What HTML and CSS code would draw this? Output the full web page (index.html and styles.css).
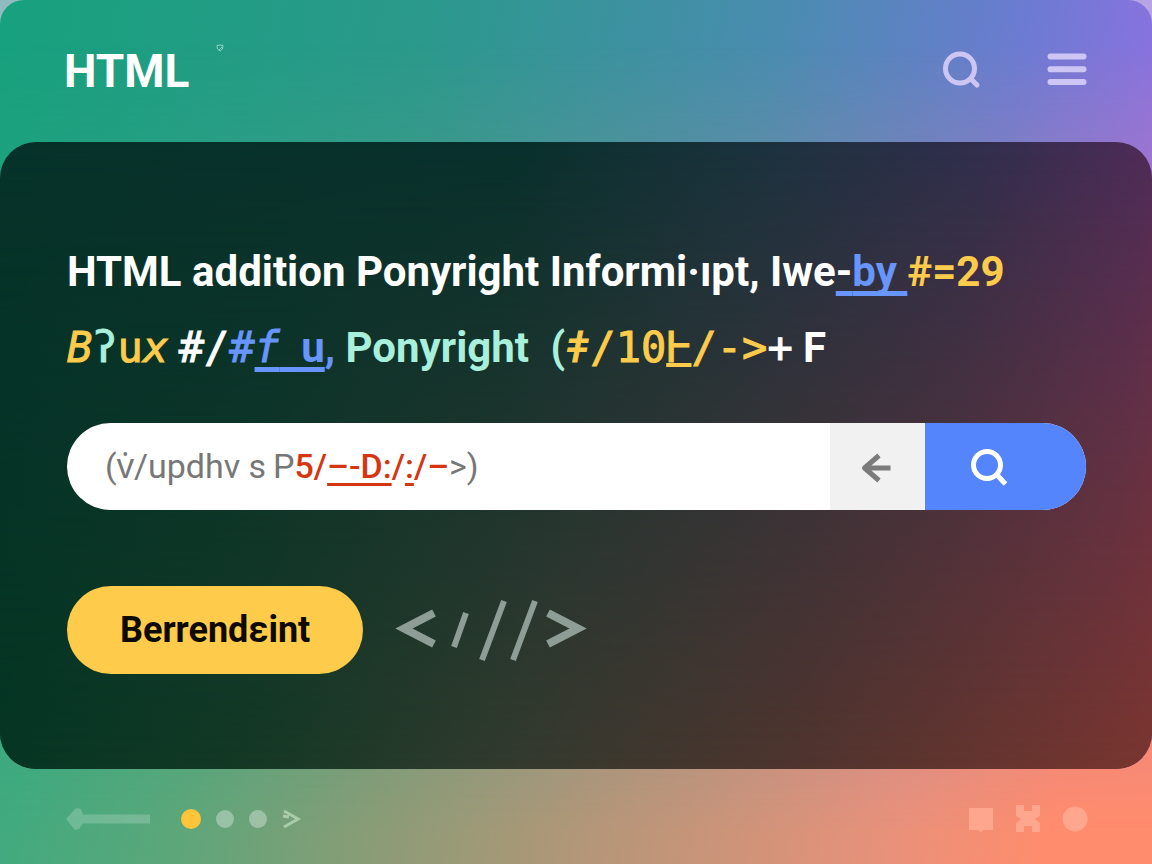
FILE: index.html
```html
<!DOCTYPE html>
<html lang="en">
<head>
<meta charset="utf-8">
<title>HTML</title>
<link rel="stylesheet" href="styles.css">
</head>
<body>
<div class="page">
  <header class="topbar">
    <div class="brand">HTML<svg class="spark" width="8" height="12" viewBox="0 0 8 12"><path d="M1 2.500 4 2l3 .5L6.500 6 4 8 1.500 6zM3 7l3-3"/></svg></div>
    <nav class="tools">
      <button class="icon-btn" aria-label="Search"><svg width="40" height="40" viewBox="0 0 40 40"><circle cx="16" cy="17.500" r="14.500"/><path d="m27 28 6 6" stroke-linecap="round"/></svg></button>
      <button class="icon-btn" aria-label="Menu"><svg width="40" height="40" viewBox="0 0 40 40"><path class="bars" d="M2.500 5.500h33M2.500 18.200h33M2.500 31h33"/></svg></button>
    </nav>
  </header>

  <main class="panel">
    <h1 class="title">
      <span class="line">HTML addition Ponyright Informi·ıpt, Iwe<a class="link" href="#by"><span class="plain">-</span>by&nbsp;</a><span class="gold">#=29</span></span>
      <span class="line"><span class="code"><span class="gold"><i>B</i></span><span class="mint">ʔ</span><span class="gold">u<i>x</i></span></span> <span class="code">#/<span class="blue">#</span></span><a class="link" href="#fu"><i class="code">f</i>&ensp;u</a><span class="blue">,</span> <span class="mint">Ponyright&ensp;(</span><span class="code"><span class="gold"><i>ǂ</i>/10<span class="base">Ⱶ</span>/-&gt;</span>+</span> F</span>
    </h1>

    <form class="search">
      <div class="field">
        <input class="input" id="query" type="text">
        <label class="hint" for="query">(v̇/updhv s&thinsp;P<span class="red">5/<u>–-D:</u>/<u>:</u>/–</span>&gt;)</label>
      </div>
      <button class="back" type="button" aria-label="Back"><svg width="32" height="32" viewBox="0 0 32 32"><path d="M28.500 17H3M17 4.500 2.500 17 17 29.500"/></svg></button>
      <button class="go" type="button" aria-label="Search"><svg width="40" height="40" viewBox="0 0 40 40"><circle cx="17" cy="18" r="13.500"/><path d="m27 28 8.500 9"/></svg></button>
    </form>

    <div class="actions">
      <button class="cta" type="button">Berrendεint</button>
      <svg class="tag" width="184" height="64" viewBox="0 0 184 64"><path d="M34 15 4 30.500 34 46M148 15l30 15.500L148 46"/><path class="slash" d="M54 49 66 15M82 62 104 3M113 62 135 3"/></svg>
    </div>
  </main>

  <footer class="bottombar">
    <div class="pager">
      <svg class="arrow" width="84" height="24" viewBox="0 0 84 24"><path d="M0 12 10 1l5 1 2 5.500h67v9H17L13 22l-4 1z"/></svg>
      <span class="dot active"></span>
      <span class="dot"></span>
      <span class="dot"></span>
      <svg class="next" width="18" height="20" viewBox="0 0 18 20"><path d="m2 2 14 8-14 8M1 7l6 1"/></svg>
    </div>
    <div class="shapes">
      <svg width="26" height="28" viewBox="0 0 26 28"><path d="M1 3h24v22H15l-2 2-3-2H1z"/></svg>
      <svg width="26" height="28" viewBox="0 0 26 28"><path d="M1 0h8v6h8V0h8v11l-5 3 5 4v9h-8v-6H9v6H1V18l5-4-5-3z"/></svg>
      <svg width="26" height="28" viewBox="0 0 26 28"><circle cx="13" cy="14" r="12.500"/></svg>
    </div>
  </footer>
</div>
</body>
</html>
```
FILE: styles.css
```css
* {
  box-sizing: border-box;
}

body {
  margin: 0;
  background: linear-gradient(90deg, #8fbcc0, #b8a4e4);
  font-family: Roboto, "Noto Sans", "DejaVu Sans", sans-serif;
  color: #fff;
}

button {
  margin: 0;
  padding: 0;
  border: 0;
  background: none;
  color: inherit;
  font: inherit;
  cursor: pointer;
}

svg {
  display: block;
  overflow: visible;
  fill: none;
  stroke: currentColor;
}

.page {
  position: relative;
  isolation: isolate;
  display: flex;
  flex-direction: column;
  min-height: 100vh;
  overflow: hidden;
  border-radius: 24px 24px 0 0;
  background: linear-gradient(100deg, #17a17d 0%, #2b998c 33%, #4a8cb0 60%, #6c7bd2 79%, #9070e2 92%, #a870d8 100%);
}

.page::before {
  content: "";
  position: absolute;
  inset: 0;
  z-index: -1;
  background: linear-gradient(100deg, #36ac80 0%, #42aa7e 12%, #5aa77a 24%, #8a9c76 40%, #b59678 57%, #ea917a 80%, #ff8c6c 92%);
  mask-image: linear-gradient(#0000 5%, #000 96%);
}

.topbar {
  display: flex;
  align-items: center;
  justify-content: space-between;
  height: 142px;
  padding: 0 64px;
}

.brand {
  display: flex;
  gap: 26px;
  font-size: 46px;
  font-weight: 700;
  line-height: 56px;
}

.spark {
  opacity: 0.5;
}

.tools {
  display: flex;
  gap: 64px;
  color: #cdc6f4;
}

.tools svg {
  stroke-width: 5;
}

.tools .bars {
  stroke-width: 6;
  stroke-linecap: round;
}

.panel {
  position: relative;
  isolation: isolate;
  display: flex;
  flex: 1;
  flex-direction: column;
  padding: 92px 66px 0 67px;
  overflow: hidden;
  border-radius: 36px;
  background: linear-gradient(95deg, #06322a 0%, #09302c 43%, #1b323e 63%, #302e4c 81%, #4d2c58 95%, #602c54 100%);
}

.panel::before {
  content: "";
  position: absolute;
  inset: 0;
  z-index: -1;
  background: linear-gradient(90deg, #053623 0%, #143925 22%, #333a2e 45%, #50342e 70%, #7a352f 100%);
  mask-image: linear-gradient(#0000, #000);
}

.title {
  margin: 0;
  font-size: 42px;
  font-weight: 700;
  line-height: 76px;
}

.line {
  display: block;
  height: 76px;
  white-space: nowrap;
}

.code {
  font-family: "DejaVu Sans Mono", "DejaVu Sans", monospace;
  font-weight: 400;
  -webkit-text-stroke: 1px currentColor;
}

.plain {
  color: #fff;
}

.gold {
  color: #fdcb4b;
}

.mint {
  color: #a8f0dc;
}

.blue,
.link {
  color: #6795fb;
}

.link {
  text-decoration: underline;
  text-decoration-thickness: 5px;
  text-underline-offset: 5px;
  text-decoration-skip-ink: none;
}

.base {
  text-decoration: underline;
  text-decoration-thickness: 4px;
  text-underline-offset: 1px;
  text-decoration-skip-ink: none;
}

.search {
  display: flex;
  height: 87px;
  margin-top: 37px;
  overflow: hidden;
  border-radius: 44px;
  background: #fff;
}

.field {
  position: relative;
  flex: 1;
}

.input {
  width: 100%;
  height: 100%;
  padding: 0 38px;
  border: 0;
  outline: 0;
  background: none;
  font: inherit;
  font-size: 34px;
}

.hint {
  position: absolute;
  inset: 0;
  padding-left: 38px;
  color: #777;
  font-size: 34px;
  line-height: 87px;
  white-space: nowrap;
}

.red {
  color: #d6360f;
  font-weight: 500;
}

.red u {
  text-decoration-thickness: 3px;
  text-underline-offset: 5px;
}

.back,
.go {
  display: flex;
  align-items: center;
}

.back {
  justify-content: center;
  width: 95px;
  background: #f1f1f1;
  color: #7b7b7b;
}

.back svg {
  stroke-width: 5;
  stroke-linejoin: round;
}

.go {
  width: 161px;
  padding-left: 45px;
  background: #5585fc;
}

.go svg {
  stroke-width: 5;
}

.actions {
  display: flex;
  align-items: center;
  gap: 37px;
  margin-top: 76px;
}

.cta {
  height: 88px;
  padding: 0 53px;
  border-radius: 44px;
  background: #fecb4a;
  color: #0c0a02;
  font-size: 36px;
  font-weight: 700;
}

.tag {
  color: #8e9d96;
  stroke-width: 8;
}

.slash {
  stroke-width: 6;
}

.bottombar {
  display: flex;
  align-items: center;
  justify-content: space-between;
  height: 95px;
  padding: 5px 64px 0 66px;
}

.pager {
  display: flex;
  align-items: center;
  gap: 15px;
}

.arrow {
  margin-right: 16px;
  fill: #fff;
  stroke: none;
  opacity: 0.2;
}

.dot {
  width: 18px;
  height: 18px;
  border-radius: 50%;
  background: #ffffff55;
}

.active {
  width: 20px;
  height: 20px;
  background: #ffc53a;
}

.next {
  color: #a9ccab;
  stroke-width: 3;
}

.shapes {
  display: flex;
  gap: 21px;
  color: #ffa78e;
}

.shapes svg {
  fill: currentColor;
  stroke: none;
}
```
